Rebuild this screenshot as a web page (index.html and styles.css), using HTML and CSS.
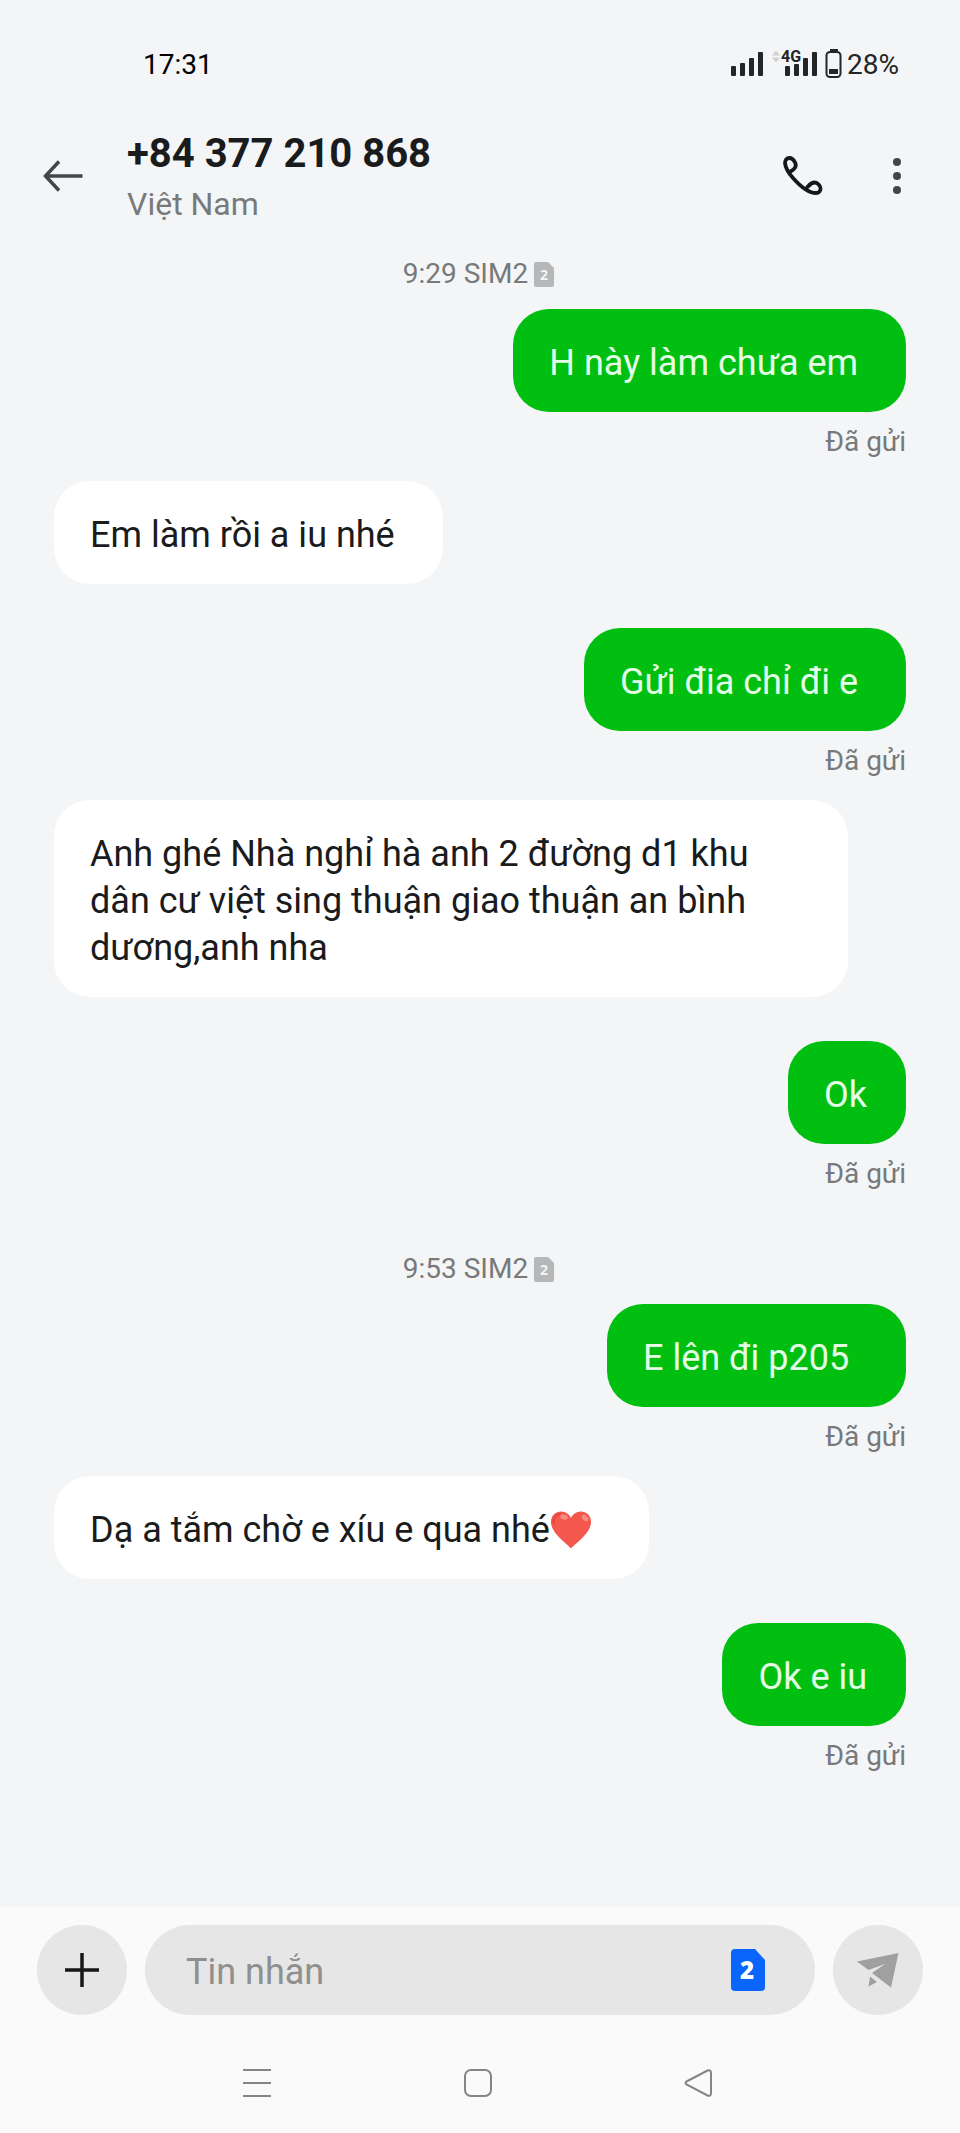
FILE: index.html
```html
<!DOCTYPE html>
<html lang="vi">
<head>
<meta charset="utf-8">
<meta name="viewport" content="width=device-width, initial-scale=1">
<title>+84 377 210 868</title>
<link rel="stylesheet" href="styles.css">
</head>
<body>
<div class="statusbar">
  <time class="clock">17:31</time>
  <div class="indicators">
    <svg class="signals" width="112" height="32" viewBox="0 0 112 32" aria-hidden="true">
      <g fill="#232526">
        <rect x="0" y="18" width="5" height="10" rx="1"/><rect x="9" y="15" width="5" height="13" rx="1"/><rect x="18" y="10" width="5" height="18" rx="1"/><rect x="27" y="4" width="5" height="24" rx="1"/>
        <rect x="54" y="18" width="5" height="10" rx="1"/><rect x="63" y="16" width="5" height="12" rx="1"/><rect x="72" y="10" width="5" height="18" rx="1"/><rect x="81" y="4" width="5" height="24" rx="1"/>
        <rect x="98" y="21" width="9" height="5"/><rect x="99" y="1" width="8" height="2"/>
      </g>
      <path d="M41 7.500l4-5 4 5zM41 9.500l4 5 4-5z" fill="#cfd1d2"/>
      <text class="network" x="50" y="14">4G</text>
      <rect x="95.500" y="4" width="14" height="25" rx="3.500" fill="none" stroke="#232526" stroke-width="2"/>
    </svg>
    <span>28%</span>
  </div>
</div>

<header class="header">
  <button class="icon-button" aria-label="Quay lại">
    <svg width="40" height="32" viewBox="0 0 40 32" fill="none" stroke="#444546" stroke-width="3.500"><path d="M39.500 16H3M16 1.500L2.500 16 16 30.500"/></svg>
  </button>
  <div class="contact">
    <h1 class="number">+84 377 210 868</h1>
    <p class="country">Việt Nam</p>
  </div>
  <button class="icon-button" aria-label="Gọi">
    <svg width="40" height="40" viewBox="0 0 40 40" fill="none" stroke="#161718" stroke-width="3.800" stroke-linecap="round" stroke-linejoin="round"><path d="M7.500 15.500C12 13 14 10 12 6.500 10.500 3.500 8.500 2 6.500 2 3.500 2 2 4 2 7 2.500 12 5.500 17 10 22 17 30 25 37 33 37 36 37 38 34.500 37.500 32 37 29 34 26.500 31.500 26.500 28 26.500 26.500 29 24 31.500"/></svg>
  </button>
  <button class="icon-button menu" aria-label="Tùy chọn khác">
    <svg width="8" height="36" viewBox="0 0 8 36" fill="#444546"><circle cx="4" cy="4" r="4"/><circle cx="4" cy="18" r="4"/><circle cx="4" cy="32" r="4"/></svg>
  </button>
</header>

<main class="chat">
  <p class="stamp">9:29 SIM2
    <svg width="20" height="25" viewBox="0 0 20 25" aria-hidden="true"><path d="M2 0h12l6 6v17q0 2-2 2H2q-2 0-2-2V2q0-2 2-2z" fill="#b5b7b8"/><text class="sim-small" x="10" y="18">2</text></svg>
  </p>
  <p class="bubble sent">H này làm chưa em&nbsp;</p>
  <p class="delivery">Đã gửi</p>
  <p class="bubble received">Em làm rồi a iu nhé&nbsp;</p>
  <p class="bubble sent">Gửi đia chỉ đi e&nbsp;</p>
  <p class="delivery">Đã gửi</p>
  <p class="bubble received">Anh ghé Nhà nghỉ hà anh 2 đường d1 khu dân cư việt sing thuận giao thuận an bình dương,anh nha</p>
  <p class="bubble sent">Ok</p>
  <p class="delivery">Đã gửi</p>
  <p class="stamp later">9:53 SIM2
    <svg width="20" height="25" viewBox="0 0 20 25" aria-hidden="true"><path d="M2 0h12l6 6v17q0 2-2 2H2q-2 0-2-2V2q0-2 2-2z" fill="#b5b7b8"/><text class="sim-small" x="10" y="18">2</text></svg>
  </p>
  <p class="bubble sent">E lên đi p205&nbsp;&nbsp;</p>
  <p class="delivery">Đã gửi</p>
  <p class="bubble received">Dạ a tắm chờ e xíu e qua nhé<svg class="heart" width="42" height="38" viewBox="0 0 42 38" role="img" aria-label="Trái tim"><path d="M21 37.500C15 31 1 22 1 11 1 4 6 .5 11 .5 16 .5 19.500 3.500 21 7 22.500 3.500 26 .5 31 .5 36 .5 41 4 41 11 41 22 27 31 21 37.500z" fill="#f4574c"/><path d="M4 13C3 7 6 3 11 3" fill="none" stroke="#e0483f" stroke-width="2"/><ellipse cx="14" cy="6" rx="4" ry="2.500" fill="#f98b80" transform="rotate(20 14 6)"/><ellipse cx="35" cy="7" rx="4" ry="2.500" fill="#f98b80" transform="rotate(45 35 7)"/></svg>&nbsp;&nbsp;</p>
  <p class="bubble sent">Ok e iu</p>
  <p class="delivery">Đã gửi</p>
</main>

<footer class="footer">
  <form class="composer">
    <button class="round" type="button" aria-label="Thêm">
      <svg width="34" height="34" viewBox="0 0 34 34" stroke="#161718" stroke-width="3.500"><path d="M17 0v34M0 17h34"/></svg>
    </button>
    <div class="field">
      <input class="message" type="text" placeholder="Tin nhắn" aria-label="Tin nhắn">
      <button class="icon-button" type="button" aria-label="SIM 2">
        <svg width="34" height="42" viewBox="0 0 34 42"><path d="M4 0h20l10 11v27q0 4-4 4H4q-4 0-4-4V4q0-4 4-4z" fill="#0a66fb"/><text class="sim-large" x="16" y="30">2</text></svg>
      </button>
    </div>
    <button class="round" type="submit" aria-label="Gửi">
      <svg width="42" height="35" viewBox="0 0 42 35" fill="#a0a0a0"><path d="M0 8.500L41.500 0 34 34.500 15 20 28 11 11.500 17zM13 23.500l7 5.500-8.500 4.500z"/></svg>
    </button>
  </form>
  <nav class="navbar" aria-label="Điều hướng">
    <button class="icon-button" aria-label="Gần đây"><svg width="28" height="28" viewBox="0 0 28 28" stroke="#858585" stroke-width="2"><path d="M0 1h28M0 14h28M0 27h28"/></svg></button>
    <button class="icon-button" aria-label="Trang chủ"><svg width="28" height="28" viewBox="0 0 28 28" fill="none" stroke="#858585" stroke-width="2"><rect x="1" y="1" width="26" height="26" rx="6"/></svg></button>
    <button class="icon-button" aria-label="Trở về"><svg width="28" height="28" viewBox="0 0 28 28" fill="none" stroke="#858585" stroke-width="2"><path d="M2.500 12.500L23.500 1.500Q27 .5 27 4V24Q27 27.500 23.500 26.500L2.500 15.500Q.5 14 2.500 12.500z"/></svg></button>
  </nav>
</footer>
</body>
</html>
```
FILE: styles.css
```css
* {
  box-sizing: border-box;
  margin: 0;
}

body {
  display: flex;
  flex-direction: column;
  min-height: 100vh;
  background: #f3f5f7;
  color: #1a1b1c;
  font-family: Roboto, "Noto Sans", sans-serif;
}

svg {
  display: block;
  flex: none;
}

button {
  padding: 0;
  border: 0;
  font: inherit;
}

.statusbar {
  display: flex;
  align-items: center;
  justify-content: space-between;
  height: 128px;
  padding: 0 61px 0 143px;
  font-size: 28px;
  color: #232526;
}

.clock {
  color: #000;
}

.indicators {
  display: flex;
  align-items: center;
  gap: 4px;
}

.network {
  font: 700 16px Roboto, sans-serif;
  fill: #232526;
}

.icon-button {
  display: flex;
  background: none;
}

.header {
  display: flex;
  align-items: center;
  padding: 0 59px 0 43px;
}

.contact {
  flex: 1;
  padding: 2px 0 0 44px;
}

.number {
  font-size: 40px;
  line-height: 48px;
  font-weight: 700;
}

.country {
  margin-top: 6px;
  font-size: 32px;
  line-height: 40px;
  color: #77797a;
}

.menu {
  margin-left: 70px;
}

.chat {
  flex: 1;
  display: flex;
  flex-direction: column;
  padding: 32px 54px 60px;
}

.stamp {
  display: flex;
  align-items: center;
  justify-content: center;
  gap: 6px;
  margin-bottom: 17px;
  padding-right: 3px;
  font-size: 28px;
  line-height: 36px;
  color: #77797a;
}

.later {
  margin-top: 38px;
}

.sim-small {
  font: 700 14px "Open Sans", sans-serif;
  fill: #f3f5f7;
  text-anchor: middle;
}

.bubble {
  max-width: 794px;
  padding: 31px 39px 25px 36px;
  border-radius: 36px;
  font-size: 36px;
  line-height: 47px;
}

.received {
  align-self: flex-start;
  margin-bottom: 44px;
  background: #fff;
}

.sent {
  align-self: flex-end;
  background: #00bf10;
  color: #e4fde6;
}

.delivery {
  margin: 12px 0 21px;
  font-size: 28px;
  line-height: 36px;
  text-align: right;
  color: #77797a;
}

.heart {
  display: inline-block;
  vertical-align: -7px;
}

.footer {
  padding-top: 18px;
  background: #fafafa;
}

.composer {
  display: flex;
  gap: 18px;
  padding: 0 37px;
}

.round {
  display: flex;
  flex: none;
  align-items: center;
  justify-content: center;
  width: 90px;
  height: 90px;
  border-radius: 50%;
  background: #e6e6e6;
}

.field {
  display: flex;
  flex: 1;
  align-items: center;
  padding: 0 50px 0 41px;
  border-radius: 45px;
  background: #e6e6e6;
}

.message {
  flex: 1;
  min-width: 0;
  padding: 4px 0 0;
  border: 0;
  outline: 0;
  background: none;
  font: 36px/48px Roboto, "Noto Sans", sans-serif;
  color: #1a1b1c;
}

.message::placeholder {
  color: #8f8f8f;
}

.sim-large {
  font: 800 24px "Open Sans", sans-serif;
  fill: #fff;
  text-anchor: middle;
}

.navbar {
  display: flex;
  justify-content: space-between;
  margin: 0 25%;
  padding: 54px 8px 36px 3px;
}
```
